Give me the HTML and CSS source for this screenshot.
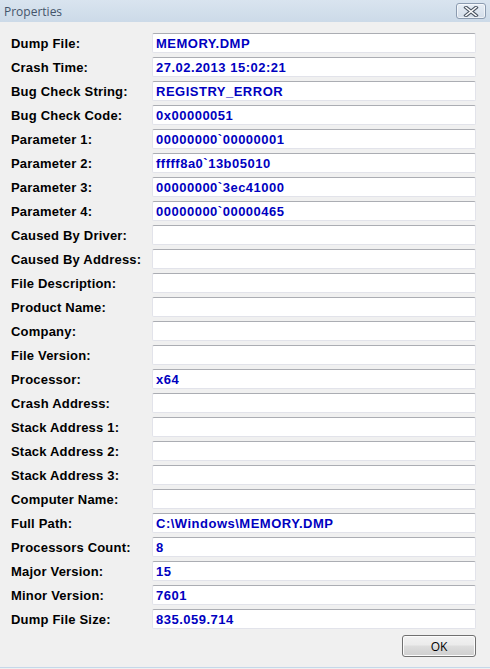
FILE: index.html
```html
<!DOCTYPE html>
<html>
<head>
<meta charset="utf-8">
<title>Properties</title>
<link rel="stylesheet" href="styles.css">
</head>
<body>
<div class="window">
  <div class="titlebar">
    <span class="title">Properties</span>
    <button class="close" aria-label="Close">
      <svg width="16" height="11" viewBox="0 0 16 11">
        <path d="M3 1.5 L13 9.5 M13 1.5 L3 9.5" stroke="#4b5563" stroke-width="3.6" stroke-linecap="square"/>
        <path d="M3 1.5 L13 9.5 M13 1.5 L3 9.5" stroke="#ffffff" stroke-width="1.6" stroke-linecap="square"/>
      </svg>
    </button>
  </div>
  <div class="content">
    <div class="fields">
      <label class="lbl">Dump File:</label><div class="box">MEMORY.DMP</div>
      <label class="lbl">Crash Time:</label><div class="box">27.02.2013 15:02:21</div>
      <label class="lbl">Bug Check String:</label><div class="box">REGISTRY_ERROR</div>
      <label class="lbl">Bug Check Code:</label><div class="box">0x00000051</div>
      <label class="lbl">Parameter 1:</label><div class="box">00000000`00000001</div>
      <label class="lbl">Parameter 2:</label><div class="box">fffff8a0`13b05010</div>
      <label class="lbl">Parameter 3:</label><div class="box">00000000`3ec41000</div>
      <label class="lbl">Parameter 4:</label><div class="box">00000000`00000465</div>
      <label class="lbl">Caused By Driver:</label><div class="box"></div>
      <label class="lbl">Caused By Address:</label><div class="box"></div>
      <label class="lbl">File Description:</label><div class="box"></div>
      <label class="lbl">Product Name:</label><div class="box"></div>
      <label class="lbl">Company:</label><div class="box"></div>
      <label class="lbl">File Version:</label><div class="box"></div>
      <label class="lbl">Processor:</label><div class="box">x64</div>
      <label class="lbl">Crash Address:</label><div class="box"></div>
      <label class="lbl">Stack Address 1:</label><div class="box"></div>
      <label class="lbl">Stack Address 2:</label><div class="box"></div>
      <label class="lbl">Stack Address 3:</label><div class="box"></div>
      <label class="lbl">Computer Name:</label><div class="box"></div>
      <label class="lbl">Full Path:</label><div class="box">C:\Windows\MEMORY.DMP</div>
      <label class="lbl">Processors Count:</label><div class="box">8</div>
      <label class="lbl">Major Version:</label><div class="box">15</div>
      <label class="lbl">Minor Version:</label><div class="box">7601</div>
      <label class="lbl">Dump File Size:</label><div class="box">835.059.714</div>
    </div>
    <div class="actions">
      <button class="ok">OK</button>
    </div>
  </div>
</div>
</body>
</html>
```

FILE: styles.css
```css
html, body {
  margin: 0;
  padding: 0;
  width: 490px;
  height: 669px;
  overflow: hidden;
  background: #f0f0f0;
}

.window {
  width: 490px;
  height: 668px;
  display: flex;
  flex-direction: column;
  background: #f0f0f0;
  border-bottom: 1px solid #c5d8ea;
  box-sizing: border-box;
}

.titlebar {
  height: 22px;
  flex: none;
  display: flex;
  align-items: center;
  justify-content: space-between;
  padding: 0 4px 0 4px;
  background: linear-gradient(#d9e4ef, #ccdae8);
}

.title {
  font-family: "Open Sans", "Noto Sans", sans-serif;
  font-size: 12px;
  color: #44546a;
}

.close {
  width: 30px;
  height: 16px;
  padding: 0;
  display: flex;
  align-items: center;
  justify-content: center;
  border: 1px solid #8b9bb0;
  border-radius: 3px;
  background: linear-gradient(#e6edf5, #d3dde9);
  box-shadow: inset 0 0 0 1px rgba(255,255,255,0.6);
}

.content {
  flex: 1;
  display: flex;
  flex-direction: column;
  padding: 11px 14px 0 11px;
}

.fields {
  display: grid;
  grid-template-columns: 141px 324px;
  grid-auto-rows: 20px;
  row-gap: 4px;
}

.lbl {
  display: flex;
  align-items: center;
  font-family: "Liberation Sans", Arial, sans-serif;
  font-weight: bold;
  font-size: 13px;
  letter-spacing: 0.2px;
  color: #000;
  white-space: nowrap;
}

.box {
  box-sizing: border-box;
  height: 20px;
  display: flex;
  align-items: center;
  padding: 0 0 0 3px;
  background: #fff;
  border: 1px solid #e2e3ea;
  border-top-color: #abadb3;
  border-radius: 2px;
  font-family: "Liberation Sans", Arial, sans-serif;
  font-weight: bold;
  font-size: 13px;
  letter-spacing: 0.5px;
  color: #0000c0;
  white-space: nowrap;
  overflow: hidden;
}

.actions {
  display: flex;
  justify-content: flex-end;
  padding-top: 6px;
}

.ok {
  width: 74px;
  height: 22px;
  padding: 0;
  border: 1px solid #707070;
  border-radius: 3px;
  background: linear-gradient(#f2f2f2 0%, #ebebeb 45%, #dddddd 50%, #cfcfcf 100%);
  box-shadow: inset 0 0 0 1px #fcfcfc;
  font-family: "Open Sans", "Noto Sans", sans-serif;
  font-size: 12px;
  color: #000;
}
```
